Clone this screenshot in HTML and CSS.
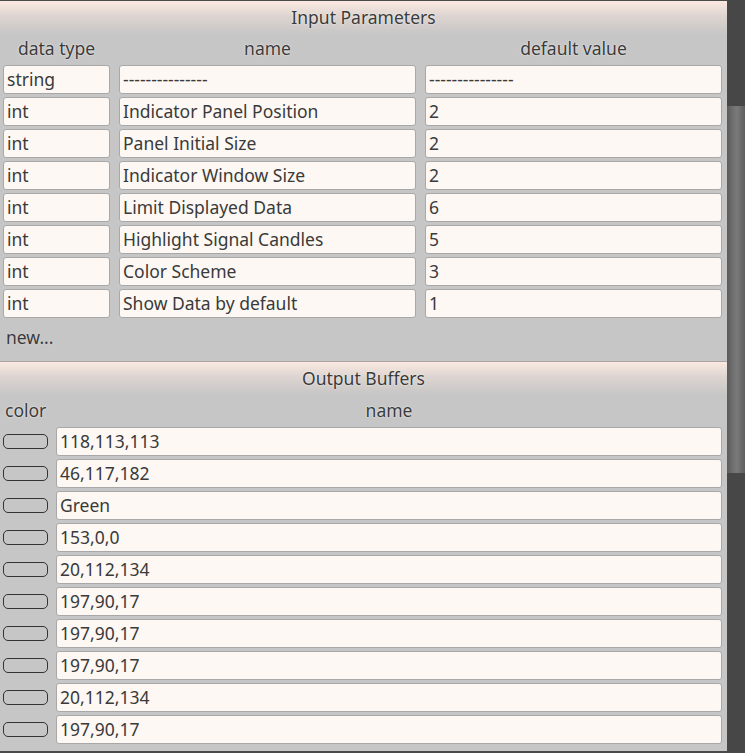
FILE: index.html
```html
<!DOCTYPE html>
<html>
<head>
<meta charset="utf-8">
<link rel="stylesheet" href="styles.css">
</head>
<body>
<div class="frame">
  <div class="panel">
    <section class="group">
      <div class="title">Input Parameters</div>
      <div class="grid params">
        <div class="colhead">data type</div>
        <div class="colhead">name</div>
        <div class="colhead">default value</div>

        <div class="cell">string</div><div class="cell">---------------</div><div class="cell">---------------</div>
        <div class="cell">int</div><div class="cell">Indicator Panel Position</div><div class="cell">2</div>
        <div class="cell">int</div><div class="cell">Panel Initial Size</div><div class="cell">2</div>
        <div class="cell">int</div><div class="cell">Indicator Window Size</div><div class="cell">2</div>
        <div class="cell">int</div><div class="cell">Limit Displayed Data</div><div class="cell">6</div>
        <div class="cell">int</div><div class="cell">Highlight Signal Candles</div><div class="cell">5</div>
        <div class="cell">int</div><div class="cell">Color Scheme</div><div class="cell">3</div>
        <div class="cell">int</div><div class="cell">Show Data by default</div><div class="cell">1</div>
      </div>
      <div class="newlink">new...</div>
    </section>
    <section class="group">
      <div class="title">Output Buffers</div>
      <div class="grid buffers">
        <div class="colhead left">color</div>
        <div class="colhead">name</div>

        <div class="swatch-wrap"><span class="swatch"></span></div><div class="cell">118,113,113</div>
        <div class="swatch-wrap"><span class="swatch"></span></div><div class="cell">46,117,182</div>
        <div class="swatch-wrap"><span class="swatch"></span></div><div class="cell">Green</div>
        <div class="swatch-wrap"><span class="swatch"></span></div><div class="cell">153,0,0</div>
        <div class="swatch-wrap"><span class="swatch"></span></div><div class="cell">20,112,134</div>
        <div class="swatch-wrap"><span class="swatch"></span></div><div class="cell">197,90,17</div>
        <div class="swatch-wrap"><span class="swatch"></span></div><div class="cell">197,90,17</div>
        <div class="swatch-wrap"><span class="swatch"></span></div><div class="cell">197,90,17</div>
        <div class="swatch-wrap"><span class="swatch"></span></div><div class="cell">20,112,134</div>
        <div class="swatch-wrap"><span class="swatch"></span></div><div class="cell">197,90,17</div>
      </div>
    </section>
  </div>
  <div class="scrollbar"><div class="thumb"></div></div>
</div>
</body>
</html>
```
FILE: styles.css
```css
* { box-sizing: border-box; }
html, body {
  margin: 0;
  padding: 0;
  background: #4a4a4a;
  width: 745px;
  height: 753px;
  overflow: hidden;
  font-family: "Noto Sans", "Open Sans", sans-serif;
  font-size: 17.5px;
  color: #3a3a3a;
}
.frame {
  display: flex;
  width: 745px;
  height: 753px;
  padding-top: 1px;
}
.panel {
  width: 727px;
  height: 750px;
  background: #c6c6c6;
  display: flex;
  flex-direction: column;
}
.group {
  display: flex;
  flex-direction: column;
}
.title {
  height: 34px;
  line-height: 32px;
  text-align: center;
  background: linear-gradient(to bottom, #fbe9e1 0%, #ddd4d0 45%, #c6c6c6 100%);
  text-shadow: 0 0 2px #fff;
}
.group + .group .title {
  border-top: 1px solid #a9a5a3;
  height: 34px;
}
.grid {
  display: grid;
  column-gap: 9px;
  row-gap: 3px;
  padding: 0 4px 0 3px;
}
.params {
  grid-template-columns: 107px 297px 297px;
}
.buffers {
  grid-template-columns: 45px 666px;
  column-gap: 8px;
}
.colhead {
  text-align: center;
  height: 27px;
  line-height: 26px;
  text-shadow: 0 0 2px #fff;
}
.buffers .colhead {
  height: 29px;
  padding-top: 2px;
}
.colhead.left {
  text-align: left;
  padding-left: 2px;
}
.cell {
  height: 29px;
  line-height: 27px;
  background: #fdf8f4;
  border: 1px solid #a8a8a8;
  border-radius: 3px;
  padding-left: 3px;
  white-space: nowrap;
  overflow: hidden;
}
.newlink {
  height: 43px;
  padding-left: 6px;
  padding-top: 7px;
  line-height: 24px;
  text-shadow: 0 0 2px #ddd;
}
.swatch-wrap {
  display: flex;
  align-items: center;
  height: 29px;
}
.swatch {
  display: block;
  width: 46px;
  height: 15px;
  border: 1.5px solid #333;
  border-radius: 5px;
  background: #c6c6c6;
}
.scrollbar {
  width: 18px;
  height: 752px;
  background: #474747;
  padding-top: 106px;
  margin-top: -1px;
}
.thumb {
  height: 367px;
  background: linear-gradient(to right, #5a5a5a 0%, #6e6e6e 30%, #7a7a7a 55%, #5e5e5e 100%);
}
```
